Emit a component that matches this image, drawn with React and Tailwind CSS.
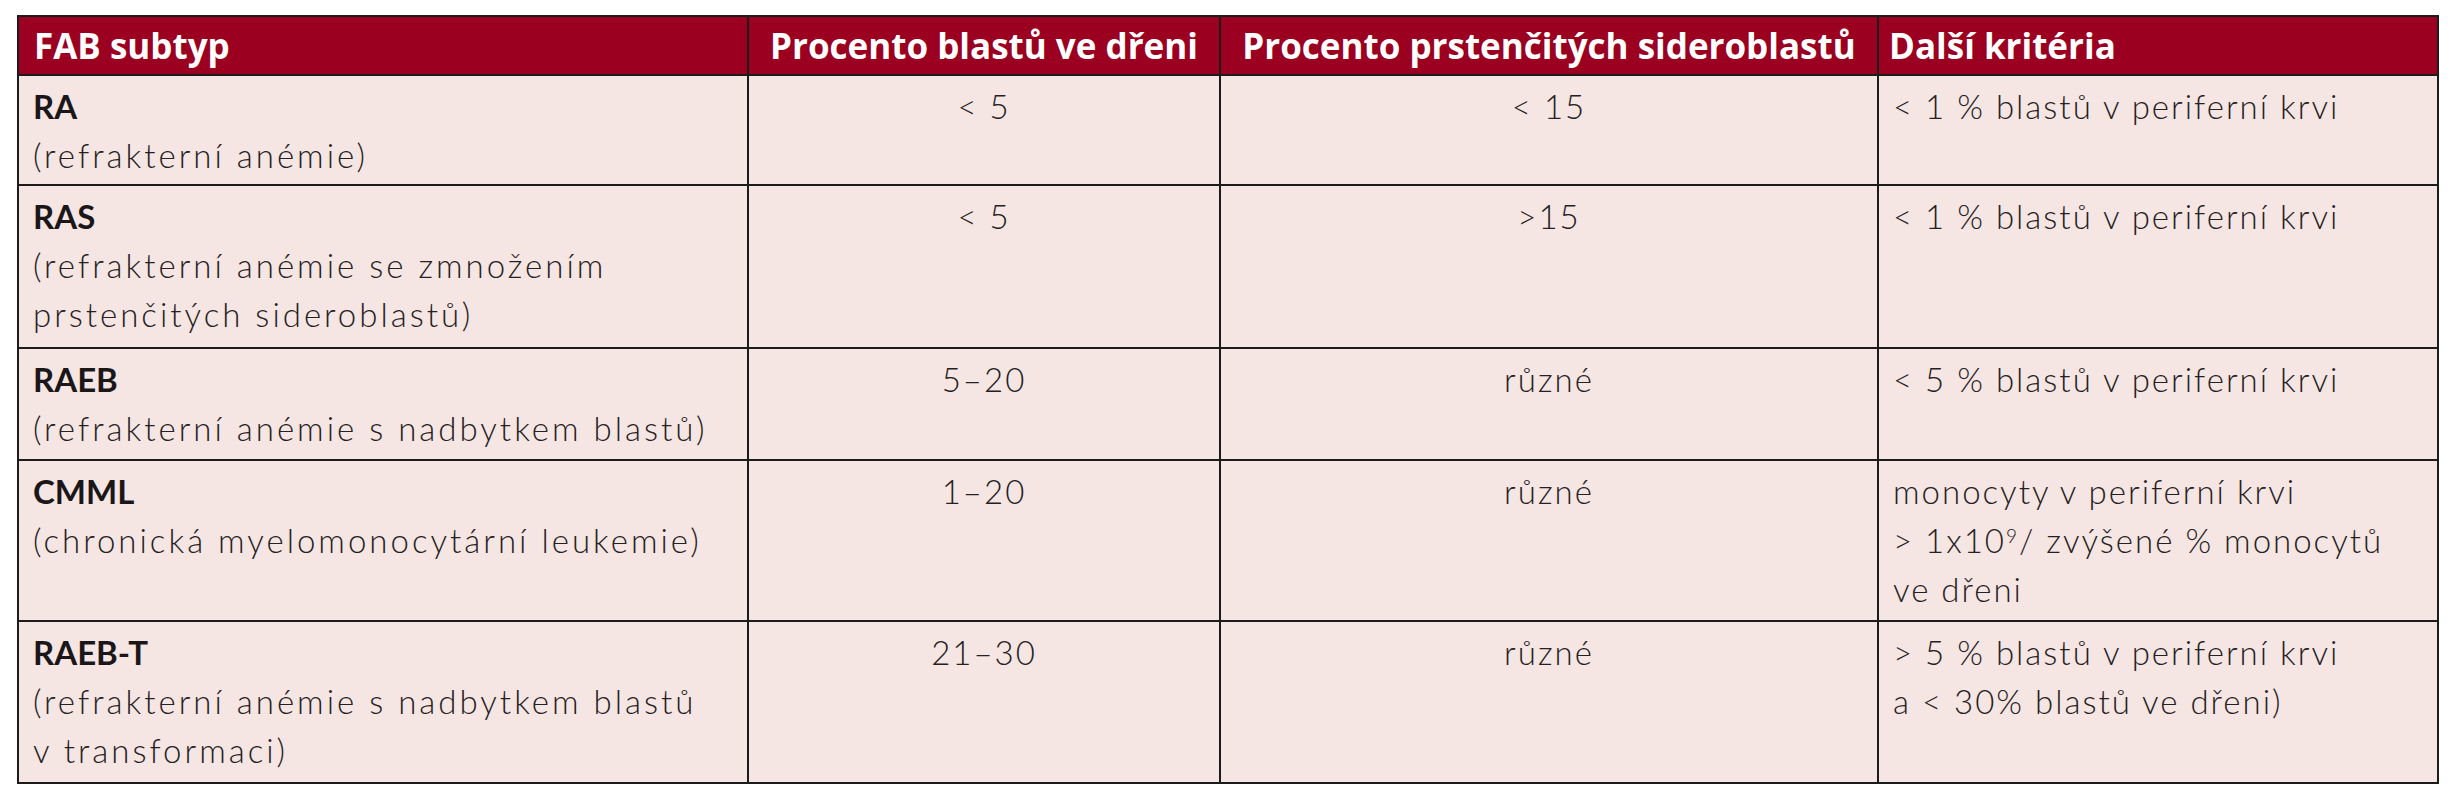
const rows = [
  {
    code: "RA",
    name: ["(refrakterní anémie)"],
    blasts: "< 5",
    sidero: "< 15",
    other: ["< 1 % blastů v periferní krvi"],
    h: "h-[110px]",
  },
  {
    code: "RAS",
    name: ["(refrakterní anémie se zmnožením", "prstenčitých sideroblastů)"],
    blasts: "< 5",
    sidero: ">15",
    other: ["< 1 % blastů v periferní krvi"],
    h: "h-[163px]",
  },
  {
    code: "RAEB",
    name: ["(refrakterní anémie s nadbytkem blastů)"],
    blasts: "5–20",
    sidero: "různé",
    other: ["< 5 % blastů v periferní krvi"],
    h: "h-[112px]",
  },
  {
    code: "CMML",
    name: ["(chronická myelomonocytární leukemie)"],
    blasts: "1–20",
    sidero: "různé",
    other: [
      "monocyty v periferní krvi",
      <>
        {"> 1x10"}
        <span className="text-[19px] align-[0.55em] leading-none">9</span>
        {"/ zvýšené % monocytů"}
      </>,
      "ve dřeni",
    ],
    h: "h-[161px]",
  },
  {
    code: "RAEB-T",
    name: ["(refrakterní anémie s nadbytkem blastů", "v transformaci)"],
    blasts: "21–30",
    sidero: "různé",
    other: ["> 5 % blastů v periferní krvi", "a < 30% blastů ve dřeni)"],
    h: "h-[162px]",
  },
];

const head = "border-2 border-[#1c1c1c] text-white font-bold text-[35px] leading-none";
const cell = "border-2 border-[#1c1c1c] align-top pt-[6px] px-[14px] font-light";

export default function App() {
  return (
    <div className="w-[2457px] h-[800px] bg-white pt-[15px] pl-[17px]">
      <table
        className="border-collapse bg-[#f5e6e3] text-[#252122] text-[33px] leading-[49px]"
        style={{ fontFamily: "Lato, 'Open Sans', sans-serif" }}
      >
        <colgroup>
          <col className="w-[730px]" />
          <col className="w-[472px]" />
          <col className="w-[658px]" />
          <col className="w-[560px]" />
        </colgroup>
        <thead>
          <tr
            className="bg-[#9c0021] h-[59px]"
            style={{ fontFamily: "'Liberation Sans Narrow', 'Open Sans', sans-serif" }}
          >
            <th className={`${head} text-left px-[15px]`}>FAB subtyp</th>
            <th className={`${head} text-center px-[10px]`}>Procento blastů ve dřeni</th>
            <th className={`${head} text-center px-[10px]`}>Procento prstenčitých sideroblastů</th>
            <th className={`${head} text-left px-[10px]`}>Další kritéria</th>
          </tr>
        </thead>
        <tbody>
          {rows.map((r) => (
            <tr key={r.code} className={r.h}>
              <td className={`${cell} tracking-[3px]`}>
                <div className="font-bold tracking-normal text-[#1b1718]">{r.code}</div>
                {r.name.map((l, i) => (
                  <div key={i}>{l}</div>
                ))}
              </td>
              <td className={`${cell} text-center tracking-[2px]`}>{r.blasts}</td>
              <td className={`${cell} text-center tracking-[2px]`}>{r.sidero}</td>
              <td className={`${cell} px-[12px] tracking-[2px]`}>
                {r.other.map((l, i) => (
                  <div key={i}>{l}</div>
                ))}
              </td>
            </tr>
          ))}
        </tbody>
      </table>
    </div>
  );
}
